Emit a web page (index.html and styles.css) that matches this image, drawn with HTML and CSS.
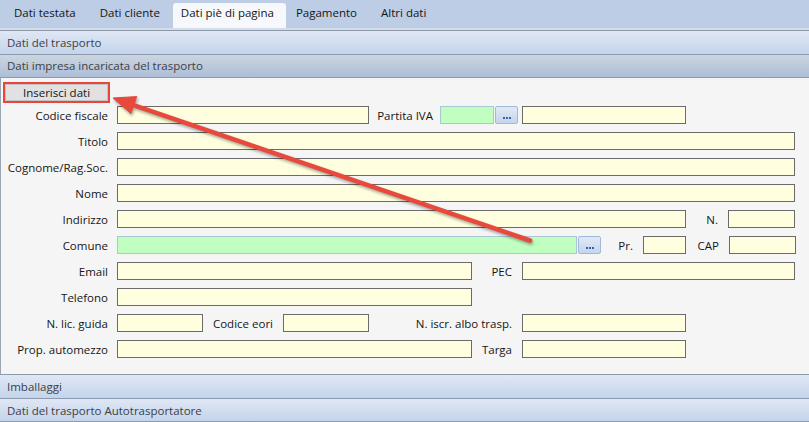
FILE: index.html
```html
<!DOCTYPE html>
<html lang="it">
<head>
    <meta charset="UTF-8">
    <title>Dati piè di pagina</title>
    <link rel="stylesheet" href="styles.css">
</head>
<body>
    <div class="window">
        <div class="tabs">
            <span class="tab">Dati testata</span>
            <span class="tab">Dati cliente</span>
            <span class="tab active">Dati piè di pagina</span>
            <span class="tab">Pagamento</span>
            <span class="tab">Altri dati</span>
        </div>

        <div class="bar">Dati del trasporto</div>
        <div class="bar bar-open">Dati impresa incaricata del trasporto</div>

        <div class="panel">
            <button class="btn">Inserisci dati</button>

            <div class="form">
                <div class="row">
                    <label class="lbl">Codice fiscale</label>
                    <input class="fld w252" type="text">
                    <span class="sub s71 tight">Partita IVA</span>
                    <input class="fld green w54" type="text">
                    <span class="dots"><svg width="8" height="2"><rect x="0" width="2" height="2"/><rect x="3" width="2" height="2"/><rect x="6" width="2" height="2"/></svg></span>
                    <input class="fld w164 gap4" type="text">
                </div>
                <div class="row">
                    <label class="lbl">Titolo</label>
                    <input class="fld w678" type="text">
                </div>
                <div class="row">
                    <label class="lbl">Cognome/Rag.Soc.</label>
                    <input class="fld w678" type="text">
                </div>
                <div class="row">
                    <label class="lbl">Nome</label>
                    <input class="fld w678" type="text">
                </div>
                <div class="row">
                    <label class="lbl">Indirizzo</label>
                    <input class="fld w569" type="text">
                    <span class="sub s42">N.</span>
                    <input class="fld w67" type="text">
                </div>
                <div class="row">
                    <label class="lbl">Comune</label>
                    <input class="fld green w460" type="text">
                    <span class="dots"><svg width="8" height="2"><rect x="0" width="2" height="2"/><rect x="3" width="2" height="2"/><rect x="6" width="2" height="2"/></svg></span>
                    <span class="sub s42">Pr.</span>
                    <input class="fld w43" type="text">
                    <span class="sub s43">CAP</span>
                    <input class="fld w67" type="text">
                </div>
                <div class="row">
                    <label class="lbl">Email</label>
                    <input class="fld w355" type="text">
                    <span class="sub s50">PEC</span>
                    <input class="fld w273" type="text">
                </div>
                <div class="row">
                    <label class="lbl">Telefono</label>
                    <input class="fld w355" type="text">
                </div>
                <div class="row">
                    <label class="lbl">N. lic. guida</label>
                    <input class="fld w86" type="text">
                    <span class="sub s80">Codice eori</span>
                    <input class="fld w86" type="text">
                    <span class="sub s153">N. iscr. albo trasp.</span>
                    <input class="fld w164" type="text">
                </div>
                <div class="row">
                    <label class="lbl">Prop. automezzo</label>
                    <input class="fld w355" type="text">
                    <span class="sub s50">Targa</span>
                    <input class="fld w164" type="text">
                </div>
            </div>
        </div>

        <div class="bar">Imballaggi</div>
        <div class="bar bar-last">Dati del trasporto Autotrasportatore</div>

        <!-- freccia di annotazione sopra al modulo -->
        <svg class="arrow" width="809" height="422" viewBox="0 0 809 422">
            <g class="arrow-shape">
                <line x1="530" y1="240.5" x2="132" y2="104.6" />
                <polygon points="113,98 136.7,96.6 130.9,113.6" />
            </g>
        </svg>
    </div>
</body>
</html>
```

FILE: styles.css
```css
* {
    box-sizing: border-box;
    margin: 0;
    padding: 0;
}

body {
    font-family: "Open Sans", "Noto Sans", sans-serif;
    font-size: 11.5px;
    color: #151515;
    background-color: #f5f5f5;
}

.window {
    position: relative;
    width: 809px;
    height: 422px;
    overflow: hidden;
}

/* linguette in alto */
.tabs {
    display: flex;
    align-items: flex-end;
    height: 30px;
    padding-left: 2px;
    background-color: #bccde5;
    border-bottom: 2px solid #d5dde9;
}

.tab {
    height: 25px;
    padding: 0 12px;
    line-height: 20px;
    white-space: nowrap;
}

.tab.active {
    background-color: #f6f8fc;
    border-radius: 3px 3px 0 0;
    padding: 0 12px 0 8px;
    margin-left: 1px;
    margin-right: -2px;
}

/* barre delle sezioni */
.bar {
    height: 24px;
    padding-left: 7px;
    line-height: 23px;
    color: #3b3f45;
    border-top: 1px solid #8d9aab;
    background: linear-gradient(#dfe7f4, #c4d4ed);
}

.bar-open {
    height: 23px;
    line-height: 22px;
    background: linear-gradient(#ccd5e0, #adbed8);
}

.bar-last {
    height: 24px;
    border-bottom: 1px solid #8d9aab;
}

.panel {
    height: 297px;
    padding-top: 6px;
    border-top: 1px solid #8d9aab;
    border-left: 1px solid #9aa5b4;
    background-color: #f5f5f5;
}

.btn {
    display: block;
    width: 103px;
    height: 17px;
    margin-left: 4px;
    font-family: inherit;
    font-size: 11.5px;
    color: #151515;
    background-color: #e1e1e1;
    border: 1px solid #c4c4c4;
    outline: 2px solid #e8453c;
}

.form {
    margin-top: 1px;
}

.row {
    display: flex;
    align-items: center;
    height: 26px;
}

.lbl {
    width: 107px;
    margin-right: 9px;
    text-align: right;
    white-space: nowrap;
}

.sub {
    padding-right: 10px;
    text-align: right;
    white-space: nowrap;
}

.sub.tight {
    padding-right: 7px;
}

.fld {
    height: 18px;
    border: 1px solid #6b6b6b;
    background-color: #ffffe0;
    outline: none;
}

.fld.green {
    border-color: #a9c8d6;
    background-color: #c0ffc0;
}

.gap4 {
    margin-left: 4px;
}

.dots {
    display: flex;
    align-items: flex-end;
    justify-content: center;
    width: 23px;
    height: 18px;
    margin-left: 1px;
    padding-bottom: 4px;
    border: 1px solid #a2b8da;
    border-radius: 2px;
    background: linear-gradient(#e0e9f6, #c6d5eb);
}

.dots svg {
    fill: #3b5fb3;
}

.w43 { width: 43px; }
.w54 { width: 54px; }
.w67 { width: 67px; }
.w86 { width: 86px; }
.w164 { width: 164px; }
.w252 { width: 252px; }
.w273 { width: 273px; }
.w355 { width: 355px; }
.w460 { width: 460px; }
.w569 { width: 569px; }
.w678 { width: 678px; }

.s42 { width: 42px; }
.s43 { width: 43px; }
.s50 { width: 50px; }
.s71 { width: 71px; }
.s80 { width: 80px; }
.s153 { width: 153px; }

.arrow {
    position: absolute;
    left: 0;
    top: 0;
    pointer-events: none;
    filter: drop-shadow(1px 2px 1.5px rgba(0, 0, 0, 0.35));
}

.arrow-shape line {
    stroke: #e8493d;
    stroke-width: 4.5;
    stroke-linecap: round;
}

.arrow-shape polygon {
    fill: #e8493d;
    stroke: #e8493d;
    stroke-width: 1;
    stroke-linejoin: round;
}
```
